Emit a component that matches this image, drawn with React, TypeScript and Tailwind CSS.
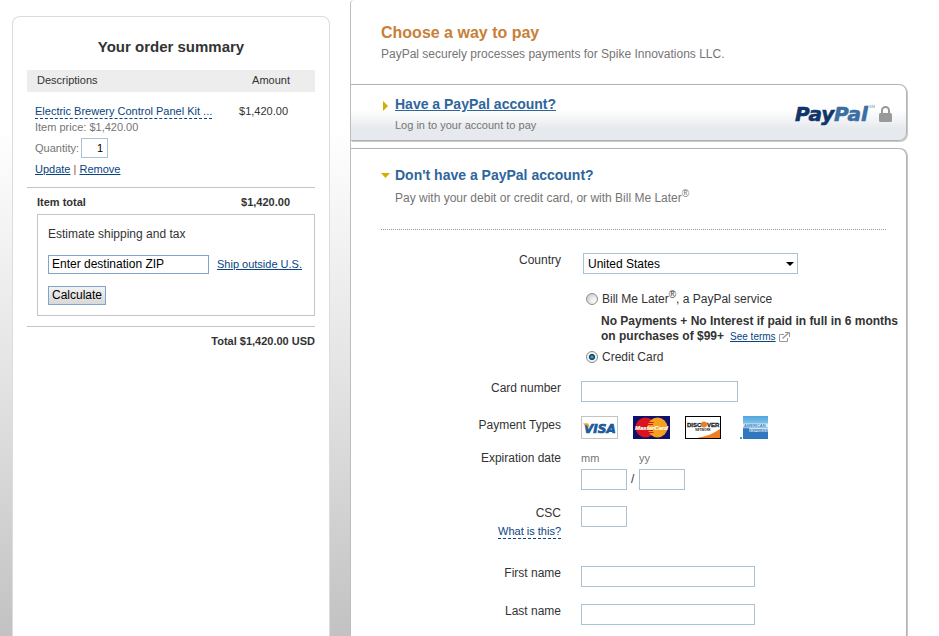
import { useState } from 'react';
import type { ReactNode } from 'react';

const inputClass = 'block h-[21px] border border-[#abc1d6] bg-white px-1 text-xs text-black outline-none';
const linkClass = 'text-[#084482] underline';

const OrderSummary = () => {
  const [quantity, setQuantity] = useState('1');
  const [zip, setZip] = useState('Enter destination ZIP');

  return (
    <aside className="ml-3 mr-5 mt-4 w-[318px] shrink-0 rounded-t-lg border border-b-0 border-[#dcdcdc] bg-white px-[14px] pt-5">
      <h2 className="mb-[13px] text-center text-[15px] leading-5 font-bold">Your order summary</h2>
      <table className="w-full border-collapse text-[11px]">
        <thead>
          <tr className="h-[22px] bg-[#ededed] leading-4">
            <th className="pb-[2px] pl-[10px] text-left font-normal">Descriptions</th>
            <th className="pr-[25px] pb-[2px] text-right font-normal">Amount</th>
          </tr>
        </thead>
        <tbody>
          <tr className="border-b border-[#c4c4c4] align-top">
            <td className="pt-3 pb-[11px] pl-2">
              <a href="#item" className="block w-fit border-b border-dashed border-[#084482] leading-[14px] text-[#084482]">
                Electric Brewery Control Panel Kit ...
              </a>
              <p className="leading-4 text-[#757575]">Item price: $1,420.00</p>
              <div className="mt-[3px] flex items-center gap-[2px]">
                <label htmlFor="quantity" className="text-[#757575]">
                  Quantity:
                </label>
                <input
                  id="quantity"
                  value={quantity}
                  onChange={e => setQuantity(e.target.value)}
                  className="block h-5 w-[27px] border border-[#abc1d6] bg-white px-1 text-right text-[11px] text-black outline-none"
                />
              </div>
              <div className="mt-1 leading-[14px]">
                <a href="#update" className={linkClass}>
                  Update
                </a>{' '}
                <span className="text-[#a0522d]">|</span>{' '}
                <a href="#remove" className={linkClass}>
                  Remove
                </a>
              </div>
            </td>
            <td className="pt-3 pr-[27px] text-right leading-[14px]">$1,420.00</td>
          </tr>
        </tbody>
        <tfoot>
          <tr className="h-[26px] font-bold">
            <th className="pt-[2px] pl-[10px] text-left">Item total</th>
            <td className="pt-[2px] pr-[25px] text-right">$1,420.00</td>
          </tr>
        </tfoot>
      </table>
      <div className="ml-[10px] border border-[#c4c4c4] px-[10px] pt-[9px] pb-[10px]">
        <label htmlFor="zip" className="block text-xs leading-5">
          Estimate shipping and tax
        </label>
        <div className="mt-[11px] flex items-center gap-2">
          <input
            id="zip"
            value={zip}
            onChange={e => setZip(e.target.value)}
            className="block h-[19px] w-[161px] border border-[#7fa3cb] bg-white px-[3px] text-xs text-black outline-none"
          />
          <a href="#outside" className={`text-[11px] leading-4 ${linkClass}`}>
            Ship outside U.S.
          </a>
        </div>
        <button
          type="button"
          className="mt-3 block h-[19px] border border-[#7fa3cb] bg-linear-to-b from-[#f2f2f2] to-[#d8d8d8] px-[3px] text-xs leading-4 text-black"
        >
          Calculate
        </button>
      </div>
      <p className="mt-[10px] border-t border-[#c4c4c4] text-right text-[11px] leading-7 font-bold">Total $1,420.00 USD</p>
    </aside>
  );
};

const PayPalLogo = () => (
  <svg width="82" height="26" viewBox="0 0 82 26" role="img" aria-label="PayPal">
    <g fontFamily="'DejaVu Sans', sans-serif" fontStyle="italic" fontWeight="700" fontSize="20" strokeWidth="0.6">
      <text x="2" y="20" fill="#0f3569" stroke="#0f3569">
        Pay
      </text>
      <text x="41" y="20" fill="#3b6ea5" stroke="#3b6ea5">
        Pal
      </text>
    </g>
    <text x="76" y="7" fill="#6f93bb" fontFamily="'Liberation Sans', sans-serif" fontSize="4">
      SM
    </text>
  </svg>
);

const LockIcon = () => (
  <svg width="13" height="16" viewBox="0 0 13 16" aria-hidden="true">
    <path d="M3 8V4.500a3.500 3.500 0 0 1 7 0V8" fill="none" stroke="#999" strokeWidth="2" />
    <rect x="0" y="7" width="13" height="9" rx="1.500" fill="#999" />
  </svg>
);

const Visa = () => (
  <svg width="37" height="23" viewBox="0 0 37 23" role="img" aria-label="Visa">
    <rect x="0.5" y="0.5" width="36" height="22" fill="#fff" stroke="#c4c4c4" />
    <text
      x="3"
      y="17"
      fill="#1b5a9c"
      stroke="#1b5a9c"
      strokeWidth="0.7"
      fontFamily="'DejaVu Sans', sans-serif"
      fontStyle="italic"
      fontWeight="700"
      fontSize="12"
    >
      VISA
    </text>
    <path d="M2 7.500h5.500l1.500 5.500C7.500 10.500 5 8.800 2 8z" fill="#f2a122" />
  </svg>
);

const MasterCard = () => (
  <svg width="37" height="23" viewBox="0 0 37 23" role="img" aria-label="MasterCard">
    <rect width="37" height="23" fill="#10106a" />
    <circle cx="12.500" cy="11.500" r="10" fill="#d9141e" />
    <circle cx="24.500" cy="11.500" r="10" fill="#f6a11c" />
    <path d="M15.500 6.500h5M15 8.500h5M15 14.500h5M15.500 16.500h5" stroke="#d9141e" />
    <text
      x="18.500"
      y="14"
      textAnchor="middle"
      fill="#fff"
      stroke="#fff"
      strokeWidth="0.2"
      fontFamily="'Liberation Sans', sans-serif"
      fontStyle="italic"
      fontWeight="700"
      fontSize="6"
    >
      MasterCard
    </text>
  </svg>
);

const Discover = () => (
  <svg width="36" height="23" viewBox="0 0 36 23" role="img" aria-label="Discover Network">
    <rect x="0.5" y="0.5" width="35" height="22" fill="#fff" stroke="#000" />
    <path d="M35 13v9H12c9-1.500 17-4.500 23-9z" fill="#ef7f22" />
    <circle cx="19" cy="8.500" r="3" fill="#ef7f22" />
    <g fill="#222" fontFamily="'Liberation Sans', sans-serif" fontWeight="700">
      <text x="2" y="11" fontSize="6" stroke="#222" strokeWidth="0.3">
        DISC
      </text>
      <text x="22" y="11" fontSize="6" stroke="#222" strokeWidth="0.3">
        VER
      </text>
      <text x="18" y="15" textAnchor="middle" fontSize="3">
        NETWORK
      </text>
    </g>
  </svg>
);

const Amex = () => (
  <svg width="28" height="23" viewBox="0 0 28 23" role="img" aria-label="American Express">
    <defs>
      <linearGradient id="amex" x1="0" y1="0" x2="0" y2="1">
        <stop offset="0" stopColor="#4fa6de" />
        <stop offset="0.4" stopColor="#8cc8ec" />
        <stop offset="0.6" stopColor="#2f78bf" />
        <stop offset="1" stopColor="#2f78bf" />
      </linearGradient>
    </defs>
    <rect x="3" width="25" height="23" fill="url(#amex)" />
    <rect x="0" y="21" width="2" height="2" fill="#2ea3c4" />
    <path d="M3 7.500h25v4H3z" fill="#dcebf7" />
    <path d="M9 12h19v4H9z" fill="#cfe1f2" />
    <g fill="#3b86c6" fontFamily="'Liberation Sans', sans-serif" fontWeight="700" fontSize="4">
      <text x="4" y="11">
        AMERICAN
      </text>
      <text x="9" y="15.500">
        EXPRESS
      </text>
    </g>
  </svg>
);

const ExternalIcon = () => (
  <svg width="11" height="10" viewBox="0 0 11 10" fill="none" stroke="#999" aria-hidden="true">
    <path d="M5 2.500H0.500v7h8V6" />
    <path d="M3.500 6.500L9.500 1" strokeWidth="1.500" />
    <path d="M6 0.500h4.500V5" />
  </svg>
);

const Radio = ({ id, checked, onChange }: { id: string; checked: boolean; onChange: () => void }) => (
  <input
    type="radio"
    name="funding"
    id={id}
    checked={checked}
    onChange={onChange}
    className="h-3 w-3 shrink-0 appearance-none rounded-full border border-[#8e8f8f] bg-[radial-gradient(circle_at_70%_70%,#f4f4f4_20%,#c4c8cc_90%)] checked:bg-[radial-gradient(circle,#5fc4ea_0%,#14466b_32%,#14466b_38%,#f0f0f0_50%)]"
  />
);

type FieldProps = {
  label: string;
  htmlFor?: string;
  extra?: ReactNode;
  className: string;
  children: ReactNode;
};

const Field = ({ label, htmlFor, extra, className, children }: FieldProps) => (
  <div className={`flex gap-5 ${className}`}>
    <div className="flex w-[210px] shrink-0 flex-col items-end gap-1 text-xs leading-[14px]">
      {htmlFor ? <label htmlFor={htmlFor}>{label}</label> : <span className="leading-[18px]">{label}</span>}
      {extra}
    </div>
    <div className="min-w-0 flex-1">{children}</div>
  </div>
);

const CardForm = () => {
  const [funding, setFunding] = useState('card');

  return (
    <form onSubmit={e => e.preventDefault()}>
      <Field label="Country" htmlFor="country" className="mt-[23px]">
        <div className="relative ml-[2px] w-[215px]">
          <select id="country" className="block h-[21px] w-full appearance-none border border-[#abc1d6] bg-white px-1 text-xs text-black outline-none">
            <option>United States</option>
            <option>Canada</option>
          </select>
          <svg width="8" height="4" viewBox="0 0 8 4" className="pointer-events-none absolute top-[9px] right-1">
            <path d="M0 0h8L4 4z" fill="#000" />
          </svg>
        </div>
        <div className="mt-[17px] ml-[5px] flex items-center gap-1 text-xs leading-4">
          <Radio id="bml" checked={funding === 'bml'} onChange={() => setFunding('bml')} />
          <label htmlFor="bml">
            Bill Me Later<sup className="text-[10px]">®</sup>, a PayPal service
          </label>
        </div>
        <div className="mt-[7px] ml-5 text-xs leading-[15px] font-bold">
          <p>No Payments + No Interest if paid in full in 6 months</p>
          <p className="flex items-center">
            on purchases of $99+
            <a href="#terms" className={`mr-[3px] ml-[6px] text-[10px] font-normal ${linkClass}`}>
              See terms
            </a>
            <ExternalIcon />
          </p>
        </div>
        <div className="mt-[5px] ml-[5px] flex items-center gap-1 text-xs leading-4">
          <Radio id="card" checked={funding === 'card'} onChange={() => setFunding('card')} />
          <label htmlFor="card">Credit Card</label>
        </div>
      </Field>
      <Field label="Card number" htmlFor="number" className="mt-4">
        <input id="number" className={`w-[157px] ${inputClass}`} />
      </Field>
      <Field label="Payment Types" className="mt-[14px]">
        <div className="flex items-center">
          <Visa />
          <span className="w-[15px]" />
          <MasterCard />
          <span className="w-[15px]" />
          <Discover />
          <span className="w-[19px]" />
          <Amex />
        </div>
      </Field>
      <Field label="Expiration date" htmlFor="month" className="mt-3">
        <div className="flex items-end text-[11px] leading-[14px]">
          <div className="w-[46px]">
            <label htmlFor="month" className="mb-1 block text-[#757575]">
              mm
            </label>
            <input id="month" className={`w-full ${inputClass}`} />
          </div>
          <span className="w-3 pb-[3px] pl-1 text-xs">/</span>
          <div className="w-[46px]">
            <label htmlFor="year" className="mb-1 block text-[#757575]">
              yy
            </label>
            <input id="year" className={`w-full ${inputClass}`} />
          </div>
        </div>
      </Field>
      <Field
        label="CSC"
        htmlFor="csc"
        className="mt-4"
        extra={
          <a href="#csc-help" className="border-b border-dashed border-[#084482] text-[11px] text-[#084482]">
            What is this?
          </a>
        }
      >
        <input id="csc" className={`w-[46px] ${inputClass}`} />
      </Field>
      <Field label="First name" htmlFor="first" className="mt-[27px]">
        <input id="first" className={`w-[174px] ${inputClass}`} />
      </Field>
      <Field label="Last name" htmlFor="last" className="mt-[17px]">
        <input id="last" className={`w-[174px] ${inputClass}`} />
      </Field>
    </form>
  );
};

export default function App() {
  return (
    <div className="flex min-h-screen bg-[linear-gradient(180deg,#fff_20%,#e3e3e3_60%,#c2c2c2_100%)] font-['Liberation_Sans',Arial,sans-serif] text-[#333]">
      <OrderSummary />
      <main className="flex min-w-0 flex-1 flex-col rounded-tl border-l border-[#bdbdbd] bg-white pr-8">
        <header className="pt-[21px] pl-[30px]">
          <h1 className="text-base leading-6 font-bold text-[#c88039]">Choose a way to pay</h1>
          <p className="text-xs leading-[18px] text-[#757575]">PayPal securely processes payments for Spike Innovations LLC.</p>
        </header>

        <section className="mt-[21px] flex items-center rounded-r-lg border border-l-0 border-[#b3b3b3] bg-[linear-gradient(180deg,#fff_45%,#e6e9ed_80%)] pt-[9px] pr-[14px] pb-[7px] pl-[30px] shadow-[1px_1px_0_#c8c8c8]">
          <svg width="5" height="10" viewBox="0 0 5 10" className="mt-[7px] mr-[7px] ml-[2px] self-start">
            <path d="M0 0l5 5-5 5z" fill="#d6ae00" />
          </svg>
          <div className="flex-1">
            <h2 className="text-sm leading-5 font-bold">
              <a href="#login" className="text-[#2f659d] underline">
                Have a PayPal account?
              </a>
            </h2>
            <p className="mt-[3px] text-[11px] leading-4 text-[#757575]">Log in to your account to pay</p>
          </div>
          <div className="flex items-center gap-1">
            <PayPalLogo />
            <LockIcon />
          </div>
        </section>

        <section className="mt-[7px] flex-1 rounded-tr-lg border border-b-0 border-l-0 border-[#b3b3b3] pt-4 shadow-[1px_0_0_#c8c8c8]">
          <div className="mr-5 ml-[30px] border-b border-dotted border-[#999] pb-[21px]">
            <h2 className="flex items-center gap-[5px] text-sm leading-5 font-bold text-[#2f659d]">
              <svg width="9" height="5" viewBox="0 0 9 5">
                <path d="M0 0h9L4.500 5z" fill="#d6ae00" />
              </svg>
              Don't have a PayPal account?
            </h2>
            <p className="mt-[3px] ml-[14px] text-xs leading-5 text-[#757575]">
              Pay with your debit or credit card, or with Bill Me Later<sup className="text-[10px]">®</sup>
            </p>
          </div>
          <CardForm />
        </section>
      </main>
    </div>
  );
}
